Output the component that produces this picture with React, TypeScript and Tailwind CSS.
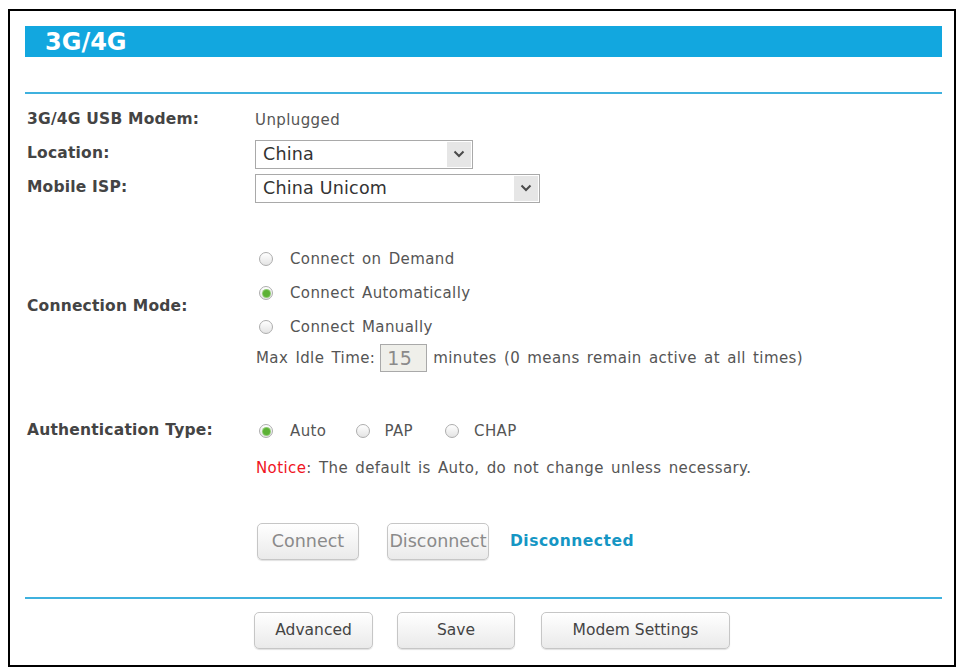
import React from "react";

function Radio({ checked = false }: { checked?: boolean }) {
  return (
    <span className="w-[14px] h-[14px] rounded-full border border-[#adadad] bg-gradient-to-b from-white to-[#e4e4e4] flex items-center justify-center shrink-0">
      {checked && <span className="w-[7px] h-[7px] rounded-full bg-[#5cb135] shadow-[0_0_0_1px_#8fcb72]" />}
    </span>
  );
}

function Select({ value, width }: { value: string; width: string }) {
  return (
    <div className={`${width} h-[29px] border border-[#a9a9a9] bg-white flex items-stretch`}>
      <span className="flex-1 flex items-center pl-[7px] text-[17.5px] tracking-[0.2px] text-[#333]">{value}</span>
      <span className="w-[24px] my-[1px] mr-[1px] bg-[#e6e6e6] flex items-center justify-center">
        <svg width="12" height="8" viewBox="0 0 12 8">
          <path d="M1.5 1.5 L6 6 L10.5 1.5" fill="none" stroke="#4a4a4a" strokeWidth="2" />
        </svg>
      </span>
    </div>
  );
}

const btn =
  "h-full rounded-[5px] border border-[#c6c6c6] bg-gradient-to-b from-white to-[#eaeaea] shadow-[0_1px_1px_rgba(0,0,0,0.12)] flex items-center justify-center";

const label = "w-[230px] pl-[2px] font-bold text-[#444] text-[15.5px] tracking-[0.2px] [word-spacing:0px]";

export default function App() {
  return (
    <div className="w-[962px] h-[668px] bg-white pt-[9px] pl-[8px] font-['DejaVu_Sans',Verdana,sans-serif] text-[15px] text-[#555]">
      <div className="w-[948px] h-[658px] border-2 border-black pl-[15px] pr-[12px] pt-[15px]">
        {/* title bar */}
        <div className="h-[31px] bg-[#12a7df] flex items-center pl-[20px] text-white font-bold text-[24px]">
          3G/4G
        </div>
        <div className="mt-[35px] h-[2px] bg-[#3fb1de]" />

        <div className="mt-[9px] flex h-[34px] items-center">
          <div className={label}>3G/4G USB Modem:</div>
          <div className="tracking-[0.4px]">Unplugged</div>
        </div>
        <div className="flex h-[34px] items-center">
          <div className={label}>Location:</div>
          <Select value="China" width="w-[218px]" />
        </div>
        <div className="flex h-[34px] items-center">
          <div className={label}>Mobile ISP:</div>
          <Select value="China Unicom" width="w-[285px]" />
        </div>

        <div className="tracking-[0.4px] [word-spacing:2px]">
          {/* connection mode */}
          <div className="mt-[37px] flex items-center">
            <div className={label}>Connection Mode:</div>
            <div className="flex flex-col">
              {[
                ["Connect on Demand", false],
                ["Connect Automatically", true],
                ["Connect Manually", false],
              ].map(([text, on]) => (
                <div key={text as string} className="h-[34px] flex items-center pl-[4px] gap-[17px]">
                  <Radio checked={on as boolean} />
                  <span>{text}</span>
                </div>
              ))}
              <div className="h-[28px] flex items-center pl-[1px]">
                <span>Max Idle Time:</span>
                <span className="ml-[5px] w-[47px] h-[28px] border border-[#a9a9a9] bg-[#efefea] flex items-center pl-[6px] text-[19px] text-[#8a8a8a]">
                  15
                </span>
                <span className="ml-[6px]">minutes (0 means remain active at all times)</span>
              </div>
            </div>
          </div>

          {/* authentication */}
          <div className="mt-[42px] flex">
            <div className={`${label} h-[34px] flex items-center`}>Authentication Type:</div>
            <div className="flex flex-col">
              <div className="h-[34px] flex items-center pl-[4px]">
                <Radio checked />
                <span className="ml-[17px]">Auto</span>
                <span className="ml-[30px]"><Radio /></span>
                <span className="ml-[14px]">PAP</span>
                <span className="ml-[32px]"><Radio /></span>
                <span className="ml-[15px]">CHAP</span>
              </div>
              <div className="mt-[3px] h-[34px] flex items-center pl-[1px] whitespace-pre">
                <span className="text-[#f0141e]">Notice</span>
                <span>: The default is Auto, do not change unless necessary.</span>
              </div>
              <div className="mt-[38px] h-[37px] flex items-center pl-[2px] tracking-normal [word-spacing:0px]">
                <button className={`${btn} w-[102px] text-[17.5px] text-[#8a8a8a]`}>Connect</button>
                <button className={`${btn} ml-[28px] w-[102px] text-[17.5px] text-[#8a8a8a]`}>Disconnect</button>
                <span className="ml-[21px] font-bold text-[#1596c4] text-[15.5px] tracking-[0.5px]">Disconnected</span>
              </div>
            </div>
          </div>
        </div>

        <div className="mt-[37px] h-[2px] bg-[#3fb1de]" />
        <div className="mt-[13px] h-[37px] flex pl-[229px] text-[15.5px] text-[#444]">
          <button className={`${btn} w-[119px]`}>Advanced</button>
          <button className={`${btn} ml-[24px] w-[118px]`}>Save</button>
          <button className={`${btn} ml-[26px] w-[189px]`}>Modem Settings</button>
        </div>
      </div>
    </div>
  );
}
